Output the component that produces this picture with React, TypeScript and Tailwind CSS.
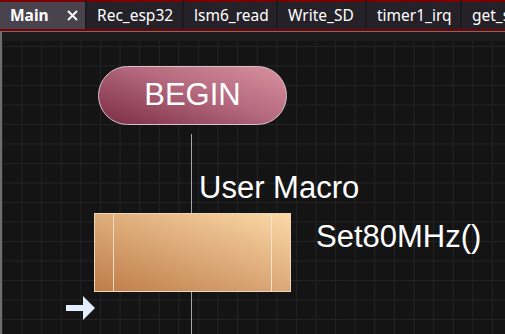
import React from "react";

const tabs = [
  { label: "Rec_esp32", w: "w-[95px]" },
  { label: "lsm6_read", w: "w-[92px]" },
  { label: "Write_SD", w: "w-[87px]" },
  { label: "timer1_irq", w: "w-[93px]" },
  { label: "get_status", w: "w-[95px]" },
];

function Tab({ label, w, active }: { label: string; w: string; active?: boolean }) {
  return (
    <div
      className={`flex h-[29px] shrink-0 items-center overflow-hidden border-t-2 border-[#7c0000] pl-[10px] ${w} ${
        active ? "bg-[#49434e]" : "bg-[#252128]"
      }`}
    >
      <span className={`whitespace-nowrap text-[15.5px] leading-none text-white ${active ? "font-bold" : ""}`}>
        {label}
      </span>
      {active && (
        <svg className="ml-auto mr-[7px]" width="11" height="11" viewBox="0 0 11 11">
          <path d="M1 1L10 10M10 1L1 10" stroke="#ffffff" strokeWidth="1.8" />
        </svg>
      )}
    </div>
  );
}

export default function App() {
  return (
    <div
      className="flex h-[334px] w-[505px] flex-col overflow-hidden bg-[#141414]"
      style={{ fontFamily: '"Noto Sans", "Open Sans", sans-serif' }}
    >
      <div className="flex h-[31px] shrink-0 gap-[2px] overflow-hidden border-b-2 border-[#7c0000] bg-[#1c1a1e]">
        <Tab label="Main" w="w-[85px]" active />
        {tabs.map((t) => (
          <Tab key={t.label} label={t.label} w={t.w} />
        ))}
      </div>

      <div className="relative flex-1 border-l-2 border-t border-[#6e6e6e] bg-[#141414]">
        <div className="h-[9px] bg-[#1c1c1c]" />
        <div className="absolute inset-x-0 bottom-0 top-[9px] bg-[linear-gradient(to_right,#232323_1px,transparent_1px),linear-gradient(to_bottom,#232323_1px,transparent_1px)] bg-[size:19.6px_19.5px] bg-[position:0px_5px]" />

        <div style={{ fontFamily: '"Liberation Sans", Arial, sans-serif' }}>
          {/* connector */}
          <div className="absolute left-[189px] top-[102px] h-[79px] w-px bg-[#a8a8a8]" />
          <div className="absolute left-[189px] top-[259px] h-[60px] w-px bg-[#a8a8a8]" />

          {/* BEGIN */}
          <div className="absolute left-[96px] top-[34px] flex h-[59px] w-[189px] items-center justify-center rounded-full border border-[#d9c3c8] bg-[linear-gradient(20deg,#7a2c43,#b56a7f_55%,#d9919f)] text-[31px] text-white">
            BEGIN
          </div>

          <div className="absolute left-[197px] top-[140px] text-[31px] leading-none text-white">User Macro</div>

          {/* macro box */}
          <div className="absolute left-[92px] top-[181px] flex h-[79px] w-[197px] border border-[#ecd6c0] bg-[linear-gradient(20deg,#bd7c48,#dcaa78_50%,#fcd9a7)]">
            <div className="w-[19px] border-r border-[#f2d9bf]" />
            <div className="flex-1" />
            <div className="w-[19px] border-l border-[#f8e2c8]" />
          </div>

          <div className="absolute left-[314px] top-[189px] text-[31px] leading-none text-white">Set80MHz()</div>

          {/* entry arrow */}
          <svg className="absolute left-[64px] top-[264px]" width="30" height="25" viewBox="0 0 30 25">
            <path d="M0 9H17V0L29 12L17 24V15H0Z" fill="#e3efff" />
          </svg>
        </div>
      </div>
    </div>
  );
}
